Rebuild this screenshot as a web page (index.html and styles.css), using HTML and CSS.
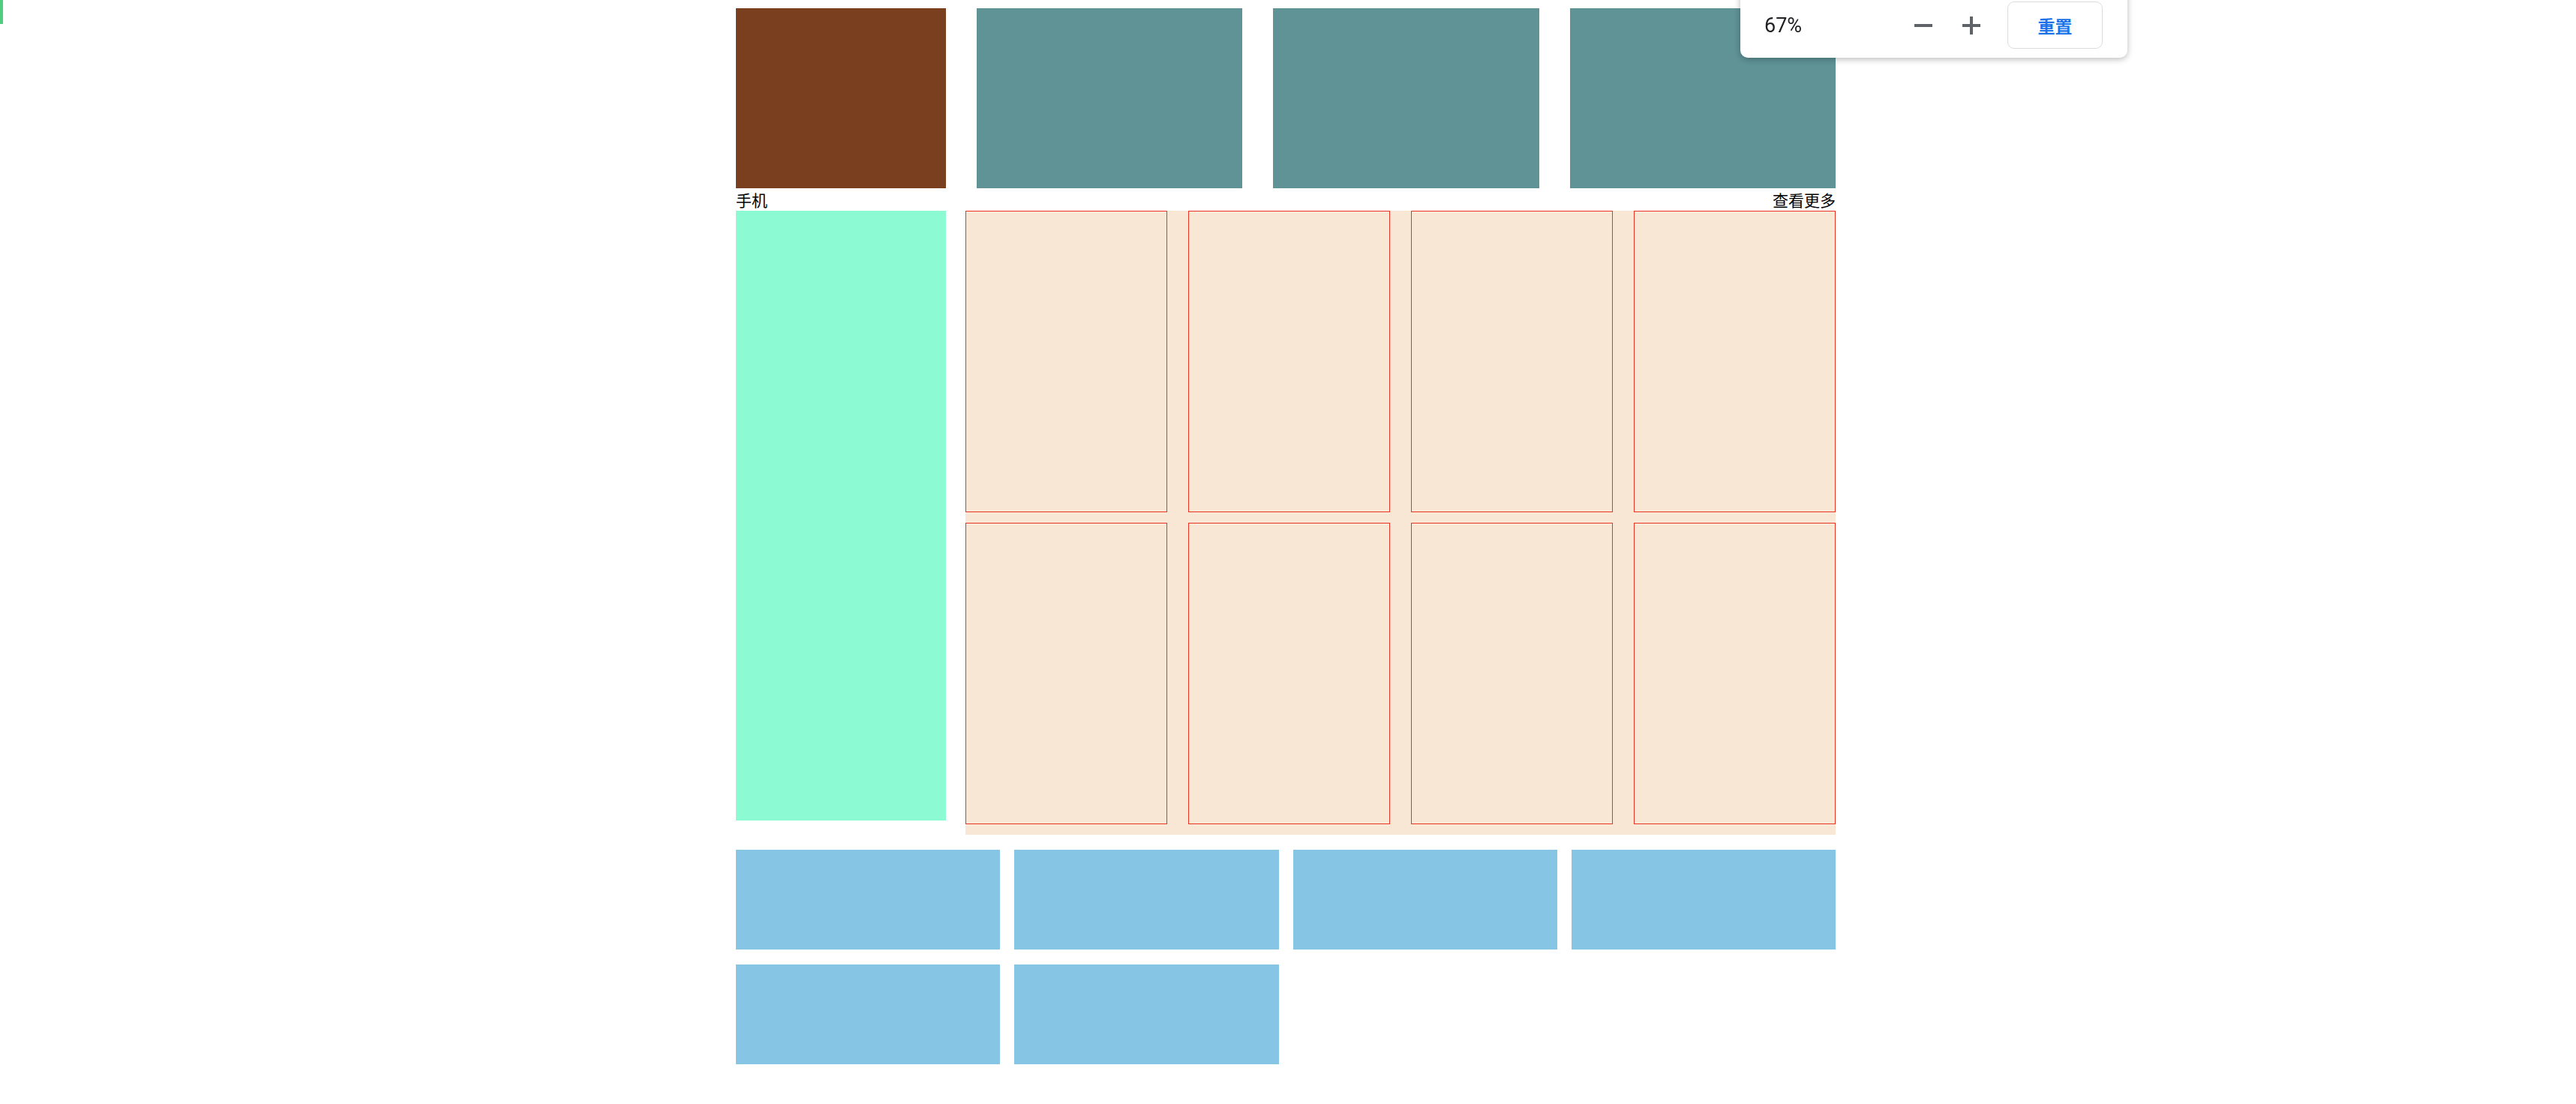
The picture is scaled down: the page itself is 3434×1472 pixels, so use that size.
FILE: index.html
```html
<!DOCTYPE html>
<html lang="zh-CN">
<head>
    <meta charset="UTF-8">
    <meta name="viewport" content="width=device-width, initial-scale=1.0">
    <title>手机</title>
    <link rel="stylesheet" href="styles.css">
</head>
<body>
    <div class="focus-mark"></div>

    <div class="page">
        <div class="banner">
            <div class="banner-main"></div>
            <div class="banner-item"></div>
            <div class="banner-item"></div>
            <div class="banner-item"></div>
        </div>

        <div class="section-head">
            <span>手机</span>
            <a class="more" href="#">查看更多</a>
        </div>

        <div class="section-body">
            <div class="side-ad"></div>
            <div class="goods">
                <div class="goods-item"></div>
                <div class="goods-item"></div>
                <div class="goods-item"></div>
                <div class="goods-item"></div>
                <div class="goods-item"></div>
                <div class="goods-item"></div>
                <div class="goods-item"></div>
                <div class="goods-item"></div>
            </div>
        </div>

        <div class="tiles">
            <div class="tile"></div>
            <div class="tile"></div>
            <div class="tile"></div>
            <div class="tile"></div>
            <div class="tile"></div>
            <div class="tile"></div>
        </div>
    </div>

    <div class="zoom-bubble">
        <span class="zoom-value">67%</span>
        <button class="zoom-btn zoom-out" aria-label="缩小">
            <svg width="24" height="24" viewBox="0 0 24 24"><path d="M0 12h24" stroke="#5f6368" stroke-width="4"/></svg>
        </button>
        <button class="zoom-btn zoom-in" aria-label="放大">
            <svg width="24" height="24" viewBox="0 0 24 24"><path d="M0 12h24M12 0v24" stroke="#5f6368" stroke-width="4"/></svg>
        </button>
        <button class="zoom-reset">重置</button>
    </div>
</body>
</html>
```

FILE: styles.css
```css
body {
    margin: 11px 6px 0 0;
    background: #fff;
    font-family: "Noto Sans CJK SC", "Noto Sans", sans-serif;
    color: #000;
}
.focus-mark {
    position: absolute;
    left: 0;
    top: 0;
    width: 4px;
    height: 32px;
    background: #4fce80;
}
.page {
    width: 1466px;
    margin: 0 auto;
}
.banner {
    display: flex;
    gap: 41px;
    height: 240px;
}
.banner-main {
    width: 280px;
    background: #7a3f1e;
}
.banner-item {
    flex: 1;
    background: #5f9396;
}
.section-head {
    display: flex;
    justify-content: space-between;
    height: 30px;
    font-size: 21px;
    line-height: 30px;
}
.more {
    color: #000;
    text-decoration: none;
}
.section-body {
    display: flex;
    align-items: flex-start;
    gap: 26px;
}
.side-ad {
    width: 280px;
    height: 813px;
    background: #8cfbd3;
}
.goods {
    flex: 1;
    display: flex;
    flex-wrap: wrap;
    justify-content: space-between;
    background: #f8e7d5;
}
.goods-item {
    box-sizing: border-box;
    width: 269px;
    height: 402px;
    margin-bottom: 14px;
    border: 1px solid #ec3323;
}
.tiles {
    display: grid;
    grid-template-columns: repeat(4, 1fr);
    column-gap: 19px;
    row-gap: 20px;
    margin-top: 20px;
}
.tile {
    height: 133px;
    background: #87c5e4;
}
.zoom-bubble {
    position: fixed;
    top: -10px;
    left: 2320px;
    width: 516px;
    height: 87px;
    box-sizing: border-box;
    padding: 0 33px 0 32px;
    display: flex;
    align-items: center;
    background: #fff;
    border-radius: 0 0 10px 10px;
    box-shadow: 0 2px 8px rgba(0, 0, 0, 0.28);
}
.zoom-value {
    font-family: Roboto, "Liberation Sans", sans-serif;
    font-size: 27px;
    color: #202124;
}
.zoom-btn {
    display: flex;
    padding: 0;
    border: none;
    background: none;
    cursor: pointer;
}
.zoom-out {
    margin-left: auto;
}
.zoom-in {
    margin-left: 40px;
}
.zoom-reset {
    margin-left: 36px;
    width: 127px;
    height: 63px;
    border: 1px solid #dadce0;
    border-radius: 9px;
    background: #fff;
    color: #1a73e8;
    font-family: "Noto Sans CJK SC", sans-serif;
    font-size: 23px;
    font-weight: bold;
    cursor: pointer;
}
```
